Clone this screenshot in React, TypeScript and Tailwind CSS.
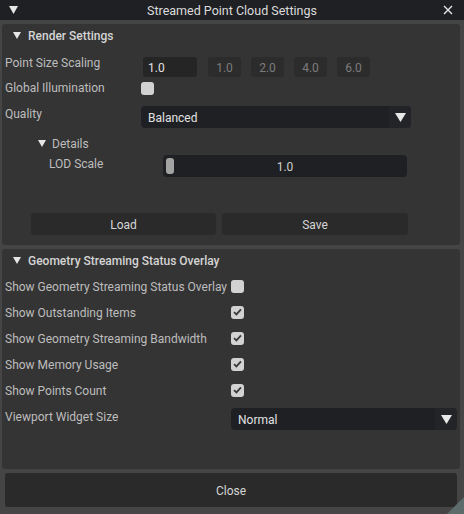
import React from 'react'

const font = { fontFamily: 'Roboto, "Liberation Sans", sans-serif' }

function Tri({ size = 8, color = '#e6e6e6' }: { size?: number; color?: string }) {
  return (
    <svg width={size} height={size - 1} viewBox="0 0 8 7" className="shrink-0">
      <polygon points="0,0 8,0 4,7" fill={color} />
    </svg>
  )
}

function Check({ checked }: { checked?: boolean }) {
  return (
    <div className="w-[13px] h-[13px] rounded-[3px] bg-[#d2d2d2] flex items-center justify-center shrink-0">
      {checked && (
        <svg width="9" height="8" viewBox="0 0 9 8">
          <path d="M1 4.2 L3.4 6.4 L8 1.4" stroke="#3a3a3a" strokeWidth="1.8" fill="none" />
        </svg>
      )}
    </div>
  )
}

function Combo({ value, className }: { value: string; className: string }) {
  return (
    <div className={`h-[22px] rounded-[4px] bg-[#1f2024] flex items-center overflow-hidden ${className}`}>
      <span className="flex-1 pl-[7px] pt-[1px] text-[12px] text-[#e2e2e2]">{value}</span>
      <div className="w-[22px] h-full bg-[#232428] flex items-center justify-center">
        <svg width="11" height="9" viewBox="0 0 11 9">
          <polygon points="0,0 11,0 5.5,9" fill="#e8e8e8" />
        </svg>
      </div>
    </div>
  )
}

function Header({ title }: { title: string }) {
  return (
    <div className="h-[22px] pt-[1px] flex items-center pl-[11px] gap-[7px] text-[12px] font-medium text-[#d4d4d4]">
      <Tri />
      <span className="pt-[1px]">{title}</span>
    </div>
  )
}

const overlayRows = [
  { label: 'Show Geometry Streaming Status Overlay', checked: false },
  { label: 'Show Outstanding Items', checked: true },
  { label: 'Show Geometry Streaming Bandwidth', checked: true },
  { label: 'Show Memory Usage', checked: true },
  { label: 'Show Points Count', checked: true },
]

export default function App() {
  return (
    <div style={font} className="w-[464px] h-[514px] bg-[#454545] relative overflow-hidden flex flex-col">
      {/* title bar */}
      <div className="h-[20px] bg-[#1f2023] flex items-center relative shrink-0">
        <div className="pl-[9px]">
          <Tri size={9} />
        </div>
        <div className="absolute inset-0 pt-[2px] flex items-center justify-center text-[12.5px] text-[#dcdcdc]">
          Streamed Point Cloud Settings
        </div>
        <div className="ml-auto pr-[11px]">
          <svg width="10" height="10" viewBox="0 0 10 10">
            <path d="M1 1 L9 9 M9 1 L1 9" stroke="#e6e6e6" strokeWidth="1.4" />
          </svg>
        </div>
      </div>

      {/* render settings */}
      <div className="mt-[4px] ml-[2px] w-[458px] h-[221px] bg-[#343434] rounded-[3px] shrink-0 flex flex-col">
        <Header title="Render Settings" />
        <div className="mt-[8px] flex items-start pl-[3px]">
          <span className="w-[138px] leading-[18px] text-[12px] text-[#bdbdbd]">Point Size Scaling</span>
          <div className="mt-[3px] flex gap-[10px]">
            <div className="w-[54px] h-[20px] rounded-[3px] bg-[#252525] text-[12px] text-[#e2e2e2] pl-[5px] pt-[1px] flex items-center">1.0</div>
            <div className="ml-[1px] flex gap-[10px]">
              {['1.0', '2.0', '4.0', '6.0'].map((v) => (
                <div key={v} className="w-[33px] h-[20px] pt-[1px] rounded-[3px] bg-[#2c2c2c] text-[12px] text-[#7c7c7c] flex items-center justify-center">
                  {v}
                </div>
              ))}
            </div>
          </div>
        </div>
        <div className="mt-[2px] flex items-start pl-[3px]">
          <span className="w-[136px] leading-[18px] text-[12px] text-[#bdbdbd]">Global Illumination</span>
          <div className="mt-[3px]">
            <Check />
          </div>
        </div>
        <div className="mt-[8px] flex items-start pl-[3px]">
          <span className="w-[136px] leading-[18px] text-[12px] text-[#bdbdbd]">Quality</span>
          <Combo value="Balanced" className="w-[270px] mt-[1px]" />
        </div>
        <div className="mt-[7px] h-[16px] flex items-center pl-[36px] gap-[6px] text-[12px] text-[#bdbdbd]">
          <Tri />
          <span className="pt-[1px]">Details</span>
        </div>
        <div className="mt-[4px] flex items-start pl-[47px]">
          <span className="w-[114px] leading-[18px] text-[12px] text-[#bdbdbd]">LOD Scale</span>
          <div className="relative w-[244px] h-[22px] pt-[1px] rounded-[4px] bg-[#1f2024] flex items-center justify-center text-[12px] text-[#cfcfcf]">
            <div className="absolute left-[3px] top-[3px] w-[8px] h-[16px] rounded-[3px] bg-[#a3a3a3]" />
            1.0
          </div>
        </div>
        <div className="mt-[36px] flex gap-[6px] pl-[29px]">
          <div className="w-[185px] h-[22px] pt-[2px] rounded-[3px] bg-[#2a2a2a] flex items-center justify-center text-[12px] text-[#d6d6d6]">Load</div>
          <div className="w-[186px] h-[22px] pt-[2px] rounded-[3px] bg-[#2a2a2a] flex items-center justify-center text-[12px] text-[#d6d6d6]">Save</div>
        </div>
      </div>

      {/* overlay settings */}
      <div className="mt-[4px] ml-[2px] w-[458px] h-[220px] bg-[#343434] rounded-[3px] shrink-0 flex flex-col">
        <Header title="Geometry Streaming Status Overlay" />
        <div className="mt-[7px] flex flex-col gap-[10px]">
          {overlayRows.map((r) => (
            <div key={r.label} className="flex items-center pl-[3px] h-[16px]">
              <span className="w-[226px] pt-[2px] text-[12px] text-[#bdbdbd] whitespace-nowrap">{r.label}</span>
              <Check checked={r.checked} />
            </div>
          ))}
        </div>
        <div className="mt-[10px] flex items-start pl-[3px]">
          <span className="w-[226px] leading-[18px] text-[12px] text-[#bdbdbd]">Viewport Widget Size</span>
          <Combo value="Normal" className="w-[226px]" />
        </div>
      </div>

      {/* close */}
      <div className="mt-[4px] ml-[5px] w-[452px] h-[34px] pt-[2px] rounded-[3px] bg-[#2a2a2a] flex items-center justify-center text-[12px] text-[#d6d6d6] shrink-0">
        Close
      </div>

      <svg width="17" height="17" viewBox="0 0 17 17" className="absolute right-0 bottom-0">
        <polygon points="17,0 17,17 0,17" fill="#5d6b6b" />
      </svg>
    </div>
  )
}
